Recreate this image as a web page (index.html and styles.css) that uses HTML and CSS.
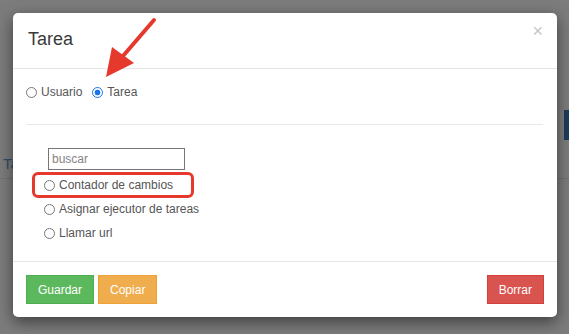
FILE: index.html
```html
<!DOCTYPE html>
<html lang="es">
<head>
    <meta charset="UTF-8">
    <meta name="viewport" content="width=device-width, initial-scale=1.0">
    <title>Tarea</title>
    <link rel="stylesheet" href="styles.css">
</head>
<body>

    <!-- Page behind the backdrop -->
    <div class="page">
        <div class="page-bar">
            <div class="page-block"></div>
        </div>
        <div class="page-tabs">
            <span class="page-tab">Ta</span>
        </div>
    </div>

    <!-- Modal dialog -->
    <div class="modal">
        <div class="modal-header">
            <h4 class="modal-title">Tarea</h4>
            <span class="close">&times;</span>
        </div>

        <div class="modal-body">
            <div class="type-row">
                <label class="radio"><input type="radio" name="tipo"> Usuario</label>
                <label class="radio"><input type="radio" name="tipo" checked> Tarea</label>
            </div>

            <hr class="divider">

            <div class="task-list">
                <input class="search" type="text" placeholder="buscar">
                <label class="radio task"><input type="radio" name="tarea"> Contador de cambios
                    <span class="highlight"></span>
                </label>
                <label class="radio task"><input type="radio" name="tarea"> Asignar ejecutor de tareas</label>
                <label class="radio task"><input type="radio" name="tarea"> Llamar url</label>
            </div>
        </div>

        <div class="modal-footer">
            <div class="btn-group">
                <button class="btn btn-success">Guardar</button>
                <button class="btn btn-warning">Copiar</button>
            </div>
            <button class="btn btn-danger">Borrar</button>
        </div>

        <!-- Annotation arrow -->
        <svg class="arrow" width="65" height="70" viewBox="0 0 65 70">
            <line x1="59" y1="6" x2="28" y2="42" stroke="#e5392d" stroke-width="4" stroke-linecap="round"/>
            <polygon points="11,63 17,33 39,49" fill="#e5392d"/>
        </svg>
    </div>

</body>
</html>
```

FILE: styles.css
```css
/* General Reset */
* {
    box-sizing: border-box;
    margin: 0;
    padding: 0;
    font-family: "Liberation Sans", Arial, sans-serif;
}

body {
    width: 569px;
    height: 334px;
    overflow: hidden;
    background: #7c7c7c;
    position: relative;
}

/* Dimmed page behind the dialog */
.page {
    padding-top: 110px;
}

.page-bar {
    height: 30px;
    display: flex;
    justify-content: flex-end;
}

.page-block {
    width: 5px;
    background: #1d3b59;
}

.page-tabs {
    height: 39px;
    padding-left: 3px;
    border-bottom: 1px solid #717171;
    display: flex;
    align-items: flex-end;
    padding-bottom: 6px;
}

.page-tab {
    font-size: 15px;
    color: #2f4d6a;
}

/* Modal */
.modal {
    position: absolute;
    top: 13px;
    left: 13px;
    width: 544px;
    background: #fff;
    border-radius: 5px;
    box-shadow: 0 5px 15px rgba(0, 0, 0, 0.5);
}

.modal-header {
    display: flex;
    justify-content: space-between;
    align-items: flex-start;
    padding: 12px 14px 15px 15px;
    border-bottom: 1px solid #e5e5e5;
}

.modal-title {
    font-size: 18px;
    font-weight: normal;
    line-height: 28px;
    color: #3a3a3a;
}

.close {
    font-size: 18px;
    line-height: 18px;
    margin-top: -3px;
    color: #c4c4c4;
}

.modal-body {
    padding: 14px 14px 16px 13px;
}

/* Radios */
.radio {
    display: flex;
    align-items: center;
    gap: 4px;
    font-size: 12px;
    color: #555;
    position: relative;
}

.radio input {
    appearance: none;
    width: 11px;
    height: 11px;
    border: 1px solid #767676;
    border-radius: 50%;
    background: #fff;
}

.radio input:checked {
    border-color: #1a73e8;
    background: radial-gradient(circle, #1a73e8 0 2.6px, #fff 3.2px);
}

.type-row {
    display: flex;
    gap: 10px;
    height: 18px;
    align-items: center;
}

.divider {
    border: none;
    border-top: 1px solid #e8e8e8;
    margin: 23px 0;
}

.task-list {
    padding-left: 18px;
}

.search {
    display: block;
    width: 137px;
    height: 22px;
    margin-left: 4px;
    margin-bottom: 3px;
    border: 1px solid #767676;
    padding: 0 3px;
    font-size: 12px;
    color: #333;
    outline: none;
}

.search::placeholder {
    color: #858585;
}

.task {
    height: 24px;
}

/* Red annotation box */
.highlight {
    position: absolute;
    top: -1px;
    left: -12px;
    width: 162px;
    height: 26px;
    border: 3px solid #e5392d;
    border-radius: 6px;
}

/* Footer */
.modal-footer {
    display: flex;
    justify-content: space-between;
    padding: 13px 13px 13px 13px;
    border-top: 1px solid #e5e5e5;
}

.btn-group {
    display: flex;
    gap: 4px;
}

.btn {
    height: 29px;
    padding: 0 11px;
    font-size: 12px;
    color: #fff;
    border: 1px solid transparent;
    cursor: pointer;
}

.btn-success {
    background: #5cb85c;
    border-color: #4cae4c;
}

.btn-warning {
    background: #f0ad4e;
    border-color: #eea236;
}

.btn-danger {
    background: #d9534f;
    border-color: #d43f3a;
}

.arrow {
    position: absolute;
    left: 82px;
    top: 1px;
}
```
